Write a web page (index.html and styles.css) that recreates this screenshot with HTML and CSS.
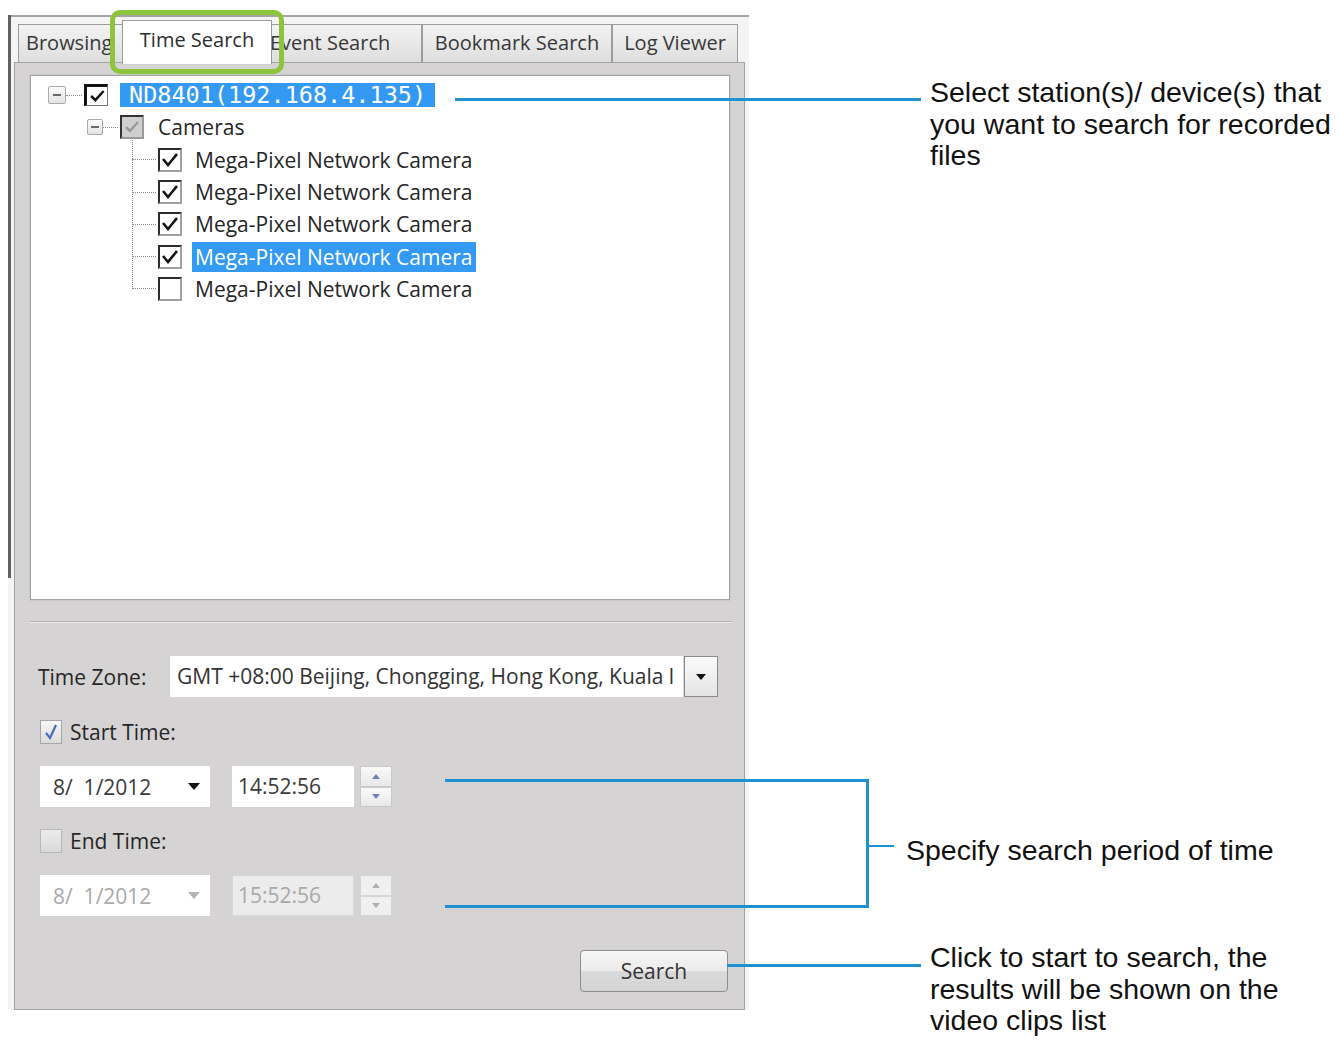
FILE: index.html
```html
<!DOCTYPE html>
<html>
<head>
<meta charset="utf-8">
<title>Time Search</title>
<link rel="stylesheet" href="styles.css">
</head>
<body>
<div class="window">
  <div class="tabs">
    <div class="tab tab-browsing">Browsing</div>
    <div class="tab tab-active">Time Search</div>
    <div class="tab tab-event">Event Search</div>
    <div class="tab tab-bookmark">Bookmark Search</div>
    <div class="tab tab-log">Log Viewer</div>
  </div>
  <div class="focus-ring"></div>
  <div class="panel">
    <div class="tree">
      <div class="row row-root">
        <span class="exp exp-lg"><span class="minus"></span></span><span class="dots dots-root"></span>
        <span class="cb cb-root"><svg viewBox="0 0 24 22" width="24" height="22"><path d="M5 11 L10 16 L20 5" fill="none" stroke="#111" stroke-width="3"/></svg></span>
        <span class="lbl lbl-sel lbl-root">ND8401(192.168.4.135)</span>
      </div>
      <div class="row row-group">
        <span class="exp"><span class="minus"></span></span><span class="dots dots-group"></span>
        <span class="cb cb-gray"><svg viewBox="0 0 20 20" width="20" height="20"><path d="M4 10 L8 14 L16 5" fill="none" stroke="#9a9a9a" stroke-width="2.5"/></svg></span>
        <span class="lbl lbl-group">Cameras</span>
      </div>
      <div class="children">
        <div class="row row-leaf"><span class="dots dots-leaf"></span><span class="cb"><svg viewBox="0 0 20 20" width="20" height="20"><path d="M3 9 L8 15 L17 4" fill="none" stroke="#111" stroke-width="2.6"/></svg></span><span class="lbl">Mega-Pixel Network Camera</span></div>
        <div class="row row-leaf"><span class="dots dots-leaf"></span><span class="cb"><svg viewBox="0 0 20 20" width="20" height="20"><path d="M3 9 L8 15 L17 4" fill="none" stroke="#111" stroke-width="2.6"/></svg></span><span class="lbl">Mega-Pixel Network Camera</span></div>
        <div class="row row-leaf"><span class="dots dots-leaf"></span><span class="cb"><svg viewBox="0 0 20 20" width="20" height="20"><path d="M3 9 L8 15 L17 4" fill="none" stroke="#111" stroke-width="2.6"/></svg></span><span class="lbl">Mega-Pixel Network Camera</span></div>
        <div class="row row-leaf"><span class="dots dots-leaf"></span><span class="cb"><svg viewBox="0 0 20 20" width="20" height="20"><path d="M3 9 L8 15 L17 4" fill="none" stroke="#111" stroke-width="2.6"/></svg></span><span class="lbl lbl-sel lbl-leaf-sel">Mega-Pixel Network Camera</span></div>
        <div class="row row-leaf"><span class="dots dots-leaf"></span><span class="cb"></span><span class="lbl">Mega-Pixel Network Camera</span></div>
      </div>
    </div>
    <div class="sep"></div>
    <div class="tz-row">
      <span class="tz-label">Time Zone:</span>
      <div class="combo">
        <span class="combo-text">GMT +08:00 Beijing, Chongging, Hong Kong, Kuala l</span>
        <span class="combo-btn"><svg viewBox="0 0 10 6" width="10" height="6"><polygon points="0,0 10,0 5,6" fill="#111"/></svg></span>
      </div>
    </div>
    <div class="check-row start-row">
      <span class="chk chk-on"><svg viewBox="0 0 20 22" width="20" height="22"><path d="M5 12 L9 17 L15 4" fill="none" stroke="#4a68c0" stroke-width="2.2"/></svg></span>
      <span class="check-label">Start Time:</span>
    </div>
    <div class="dt-row">
      <div class="date"><span class="date-text">8/&nbsp; 1/2012</span><svg class="date-arrow" viewBox="0 0 12 7" width="12" height="7"><polygon points="0,0 12,0 6,7" fill="#111"/></svg></div>
      <div class="time">14:52:56</div>
      <div class="spin">
        <span class="spin-btn"><svg viewBox="0 0 8 5" width="8" height="5"><polygon points="0,5 8,5 4,0" fill="#6f80b6"/></svg></span>
        <span class="spin-btn"><svg viewBox="0 0 8 5" width="8" height="5"><polygon points="0,0 8,0 4,5" fill="#6f80b6"/></svg></span>
      </div>
    </div>
    <div class="check-row end-row">
      <span class="chk chk-off"></span>
      <span class="check-label">End Time:</span>
    </div>
    <div class="dt-row dt-disabled">
      <div class="date"><span class="date-text">8/&nbsp; 1/2012</span><svg class="date-arrow" viewBox="0 0 12 7" width="12" height="7"><polygon points="0,0 12,0 6,7" fill="#b4b4b4"/></svg></div>
      <div class="time">15:52:56</div>
      <div class="spin">
        <span class="spin-btn"><svg viewBox="0 0 8 5" width="8" height="5"><polygon points="0,5 8,5 4,0" fill="#b0b0b0"/></svg></span>
        <span class="spin-btn"><svg viewBox="0 0 8 5" width="8" height="5"><polygon points="0,0 8,0 4,5" fill="#b0b0b0"/></svg></span>
      </div>
    </div>
    <div class="actions">
      <button class="search-btn" type="button">Search</button>
    </div>
  </div>
</div>

<div class="callout-line l1"></div>
<div class="callout-line b-top"></div>
<div class="callout-line b-vert"></div>
<div class="callout-line b-bot"></div>
<div class="callout-line b-tick"></div>
<div class="callout-line l3"></div>

<div class="note n1">Select station(s)/ device(s) that<br>you want to search for recorded<br>files</div>
<div class="note n2">Specify search period of time</div>
<div class="note n3">Click to start to search, the<br>results will be shown on the<br>video clips list</div>
</body>
</html>
```

FILE: styles.css
```css
* { box-sizing: border-box; }
html, body { margin: 0; padding: 0; }
body {
  width: 1340px;
  height: 1043px;
  overflow: hidden;
  background: #fff;
  position: relative;
  font-family: "Open Sans", "Noto Sans", sans-serif;
}

/* window frame */
.window {
  position: relative;
  margin: 15px 0 0 8px;
  width: 741px;
  border-top: 2px solid #a4a4a4;
  background: #f4f4f4;
  padding-left: 3px;
}
.window::before {
  content: "";
  position: absolute;
  left: 0;
  top: -2px;
  width: 3px;
  height: 563px;
  background: #616161;
}

/* tabs */
.tabs {
  position: relative;
  z-index: 2;
  display: flex;
  align-items: flex-end;
  height: 45px;
  padding-left: 7px;
}
.tab {
  height: 38px;
  border: 1px solid #9c9c9c;
  border-bottom: none;
  background: linear-gradient(#f3f3f3, #dedede);
  font-size: 20px;
  color: #383838;
  line-height: 36px;
  white-space: nowrap;
  overflow: hidden;
}
.tab-browsing { width: 106px; padding-left: 7px; }
.tab-active {
  position: relative;
  z-index: 1;
  width: 150px;
  height: 44px;
  margin: 0 -6px -2px -2px;
  background: #fff;
  text-align: center;
  line-height: 38px;
  color: #2e2e2e;
}
.tab-event { width: 156px; padding-left: 3px; }
.tab-bookmark { width: 190px; text-align: center; }
.tab-log { width: 126px; text-align: center; }

.focus-ring {
  position: absolute;
  z-index: 3;
  left: 102px;
  top: -7px;
  width: 174px;
  height: 64px;
  border: 5px solid #8cc43c;
  border-radius: 10px;
}

/* panel */
.panel {
  width: 731px;
  margin-left: 3px;
  border: 1px solid #a3a3a3;
  background: #d5d3d3;
  padding: 12px 14px 17px 15px;
}

/* tree */
.tree {
  height: 525px;
  background: #fff;
  border: 1px solid #a2a2a2;
  box-shadow: 0 0 0 1px #c9c9c9;
  padding-top: 3px;
}
.row {
  display: flex;
  align-items: center;
  height: 32.3px;
  font-size: 21px;
  color: #262626;
  white-space: nowrap;
}
.row-root { padding-left: 17px; }
.row-group { padding-left: 56px; }
.exp {
  width: 16px;
  height: 16px;
  border: 1px solid #a9a9a9;
  border-radius: 2px;
  background: linear-gradient(#fdfdfd, #e3e3e3);
  display: flex;
  align-items: center;
  justify-content: center;
  flex: none;
}
.exp-lg { width: 18px; height: 18px; }
.minus { width: 8px; height: 2px; background: #6a6a6a; }
.dots {
  height: 0;
  border-bottom: 1px dotted #8c8c8c;
  flex: none;
}
.dots-root { width: 16px; margin-right: 2px; }
.dots-group { width: 15px; margin-right: 2px; }
.dots-leaf { width: 24px; margin-right: 2px; }

.cb {
  width: 24px;
  height: 24px;
  flex: none;
  background: #fff;
  border: 2px solid;
  border-color: #2c2c2c #a0a0a0 #a0a0a0 #2c2c2c;
  display: flex;
  align-items: center;
  justify-content: center;
}
.cb-root { height: 22px; border-width: 3px 1px 1px 3px; border-color: #111 #777 #777 #111; }
.cb-gray { background: #cfcfcf; border-color: #333 #9a9a9a #9a9a9a #333; }

.lbl { margin-left: 10px; padding: 0 3px; line-height: 30px; }
.lbl-group { margin-left: 11px; }
.lbl-sel { background: #3399f3; color: #fff; }
.lbl-root {
  margin-left: 12px;
  padding: 0 9px;
  line-height: 24px;
  font-family: "DejaVu Sans Mono", monospace;
  font-size: 23.5px;
}
.lbl-leaf-sel { padding: 0 4px 0 3px; }

.children {
  position: relative;
  margin-left: 101px;
}
.children::before {
  content: "";
  position: absolute;
  left: 0;
  top: -4px;
  bottom: 16px;
  border-left: 1px dotted #8c8c8c;
}

/* separator */
.sep {
  margin: 21px -2px 0 0;
  height: 2px;
  border-top: 1px solid #b3b1b1;
  border-bottom: 1px solid #ebebeb;
}

/* controls */
.tz-row {
  display: flex;
  align-items: center;
  margin-top: 33px;
  height: 41px;
  font-size: 21px;
  color: #262626;
}
.tz-label { width: 140px; padding-left: 8px; white-space: nowrap; }
.combo { display: flex; width: 548px; height: 41px; }
.combo-text {
  flex: 1;
  background: #fff;
  padding-left: 7px;
  line-height: 41px;
  white-space: nowrap;
  overflow: hidden;
  color: #333;
}
.combo-btn {
  width: 34px;
  border: 1px solid #8b8b8b;
  background: linear-gradient(#fbfbfb, #e4e4e4);
  display: flex;
  align-items: center;
  justify-content: center;
  margin: 0 0 0 1px;
}

.check-row {
  display: flex;
  align-items: center;
  height: 24px;
  padding-left: 10px;
  font-size: 21px;
  color: #262626;
}
.start-row { margin-top: 23px; }
.end-row { margin-top: 22px; }
.chk {
  width: 22px;
  height: 24px;
  border: 1px solid #a5a5a5;
  background: linear-gradient(#f6f6f6, #dcdcdc);
  display: flex;
  align-items: center;
  justify-content: center;
  flex: none;
}
.chk-off { background: linear-gradient(#ececec, #d9d9d9); border-color: #b8b8b8; }
.check-label { margin-left: 8px; }

.dt-row {
  display: flex;
  margin-top: 22px;
  height: 41px;
  padding-left: 10px;
  font-size: 21px;
  color: #3a3a3a;
}
.date {
  width: 170px;
  background: #fff;
  display: flex;
  align-items: center;
  justify-content: space-between;
  padding: 0 10px 0 13px;
}
.time {
  width: 122px;
  margin-left: 22px;
  background: #fff;
  padding-left: 6px;
  line-height: 41px;
}
.spin {
  width: 32px;
  margin-left: 6px;
  display: flex;
  flex-direction: column;
}
.spin-btn {
  flex: 1;
  border: 1px solid #c9c9c9;
  background: linear-gradient(#fafafa, #e8e8e8);
  display: flex;
  align-items: center;
  justify-content: center;
}
.dt-disabled { color: #a9a9a9; }
.dt-disabled .time { background: #ececec; border: 1px solid #d8d8d8; line-height: 39px; padding-left: 5px; }
.dt-disabled .spin-btn { background: #f0f0f0; border-color: #d6d6d6; }

.actions {
  display: flex;
  justify-content: flex-end;
  margin-top: 34px;
  padding-right: 2px;
}
.search-btn {
  width: 148px;
  height: 42px;
  border: 1px solid #8d8d8d;
  border-radius: 4px;
  background: linear-gradient(#f6f6f6 0%, #ebebeb 50%, #dadada 51%, #d4d4d4 100%);
  font-family: "Open Sans", "Noto Sans", sans-serif;
  font-size: 21px;
  color: #333;
  padding: 0;
}

/* callouts */
.callout-line { position: absolute; background: #1c93d0; }
.l1 { left: 455px; top: 98px; width: 466px; height: 3px; }
.b-top { left: 445px; top: 779px; width: 424px; height: 3px; }
.b-vert { left: 866px; top: 779px; width: 3px; height: 129px; }
.b-bot { left: 445px; top: 905px; width: 424px; height: 3px; }
.b-tick { left: 868px; top: 845px; width: 26px; height: 2px; }
.l3 { left: 727px; top: 964px; width: 194px; height: 3px; }

.note {
  position: absolute;
  font-family: "Liberation Sans", Arial, sans-serif;
  font-size: 28.5px;
  line-height: 31.5px;
  color: #111;
  white-space: nowrap;
}
.n1 { left: 930px; top: 77px; }
.n2 { left: 906px; top: 835px; }
.n3 { left: 930px; top: 942px; }
```
